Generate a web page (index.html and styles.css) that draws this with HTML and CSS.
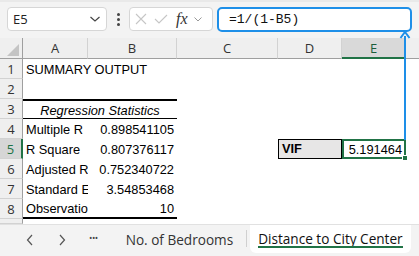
FILE: index.html
```html
<!DOCTYPE html>
<html lang="en">
<head>
  <meta charset="UTF-8">
  <title>Distance to City Center</title>
  <link rel="stylesheet" href="styles.css">
</head>
<body>
  <div class="formula-bar">
    <div class="name-box">
      <span>E5</span>
      <svg width="12" height="8" viewBox="0 0 12 8"><polyline points="1.5,2 6,6 10.5,2" fill="none" stroke="#444" stroke-width="1.2"/></svg>
    </div>
    <div class="grip">
      <i></i><i></i><i></i>
    </div>
    <div class="fx-box">
      <svg width="14" height="14" viewBox="0 0 14 14"><path d="M2 2 L12 12 M12 2 L2 12" stroke="#c6c6c6" stroke-width="1.1"/></svg>
      <svg width="16" height="14" viewBox="0 0 16 14"><polyline points="2,7 6,11 14,3" fill="none" stroke="#c6c6c6" stroke-width="1.1"/></svg>
      <span class="fx">fx</span>
      <svg width="10" height="7" viewBox="0 0 10 7"><polyline points="1.5,1.5 5,5 8.5,1.5" fill="none" stroke="#999" stroke-width="1"/></svg>
    </div>
    <div class="formula-input">=1/(1-B5)</div>
  </div>

  <div class="sheet">
    <div class="hdr corner"><span class="tri"></span></div>
    <div class="hdr col">A</div>
    <div class="hdr col">B</div>
    <div class="hdr col">C</div>
    <div class="hdr col">D</div>
    <div class="hdr col active">E</div>
    <div class="hdr col last"></div>

    <div class="hdr row">1</div>
    <div class="cell spill">SUMMARY OUTPUT</div>
    <div class="cell"></div><div class="cell"></div><div class="cell"></div><div class="cell"></div><div class="cell"></div>

    <div class="hdr row">2</div>
    <div class="cell"></div><div class="cell"></div><div class="cell"></div><div class="cell"></div><div class="cell"></div><div class="cell"></div>

    <div class="hdr row">3</div>
    <div class="cell title">Regression Statistics</div>
    <div class="cell"></div><div class="cell"></div><div class="cell"></div><div class="cell"></div>

    <div class="hdr row">4</div>
    <div class="cell label">Multiple R</div>
    <div class="cell num">0.898541105</div>
    <div class="cell"></div><div class="cell"></div><div class="cell"></div><div class="cell"></div>

    <div class="hdr row active">5</div>
    <div class="cell label">R Square</div>
    <div class="cell num">0.807376117</div>
    <div class="cell"></div>
    <div class="cell vif">VIF</div>
    <div class="cell num selected">5.191464<span class="handle"></span></div>
    <div class="cell"></div>

    <div class="hdr row">6</div>
    <div class="cell label">Adjusted R Square</div>
    <div class="cell num">0.752340722</div>
    <div class="cell"></div><div class="cell"></div><div class="cell"></div><div class="cell"></div>

    <div class="hdr row">7</div>
    <div class="cell label">Standard Error</div>
    <div class="cell num">3.54853468</div>
    <div class="cell"></div><div class="cell"></div><div class="cell"></div><div class="cell"></div>

    <div class="hdr row">8</div>
    <div class="cell label last-row">Observations</div>
    <div class="cell num last-row">10</div>
    <div class="cell"></div><div class="cell"></div><div class="cell"></div><div class="cell"></div>

    <div class="hdr row"></div>
    <div class="cell"></div><div class="cell"></div><div class="cell"></div><div class="cell"></div><div class="cell"></div><div class="cell"></div>
  </div>

  <div class="tabs">
    <svg class="nav" width="10" height="14" viewBox="0 0 10 14"><polyline points="7,2 2.5,7 7,12" fill="none" stroke="#555" stroke-width="1.2"/></svg>
    <svg class="nav" width="10" height="14" viewBox="0 0 10 14"><polyline points="3,2 7.5,7 3,12" fill="none" stroke="#555" stroke-width="1.2"/></svg>
    <span class="more">&bull;&bull;&bull;</span>
    <span class="tab">No. of Bedrooms</span>
    <span class="sep"></span>
    <span class="tab current">Distance to City Center</span>
  </div>

  <svg class="arrow" width="12" height="112" viewBox="0 0 12 112">
    <line x1="6" y1="6" x2="6" y2="110" stroke="#1e8fe8" stroke-width="2"/>
    <polyline points="1.5,8 6,2 10.5,8" fill="none" stroke="#1e8fe8" stroke-width="2"/>
  </svg>
</body>
</html>
```

FILE: styles.css
```css
* {
  box-sizing: border-box;
}
body {
  margin: 0;
  width: 419px;
  height: 256px;
  overflow: hidden;
  position: relative;
  background: #fff;
  font-family: "Liberation Sans", Arial, sans-serif;
}

/* formula bar */
.formula-bar {
  height: 38px;
  background: #f3f3f3;
  border-top: 2px solid #e9e9e9;
  display: flex;
  align-items: flex-start;
  padding: 5px 7px 0 7px;
}
.name-box {
  width: 100px;
  height: 24px;
  background: #fff;
  border: 1px solid #d6d6d6;
  border-radius: 4px;
  display: flex;
  align-items: center;
  justify-content: space-between;
  padding: 0 5px 0 5px;
  font-family: "Open Sans", "Noto Sans", sans-serif;
  font-size: 13px;
  color: #222;
}
.grip {
  width: 22px;
  height: 24px;
  display: flex;
  flex-direction: column;
  align-items: center;
  justify-content: center;
  gap: 2px;
}
.grip i {
  width: 3px;
  height: 3px;
  border-radius: 50%;
  background: #444;
}
.fx-box {
  width: 84px;
  height: 24px;
  background: #fff;
  border: 1px solid #d6d6d6;
  border-radius: 4px;
  display: flex;
  align-items: center;
  gap: 5px;
  padding-left: 4px;
}
.fx {
  font-family: "Liberation Serif", "Times New Roman", serif;
  font-style: italic;
  font-size: 16px;
  color: #333;
  margin-left: 2px;
}
.formula-input {
  margin-left: 4px;
  width: 195px;
  height: 25px;
  background: #fff;
  border: 2px solid #1e8fe8;
  border-radius: 5px;
  font-family: "Liberation Mono", "DejaVu Sans Mono", monospace;
  font-size: 13px;
  line-height: 21px;
  padding-left: 10px;
  color: #111;
}

/* sheet grid */
.sheet {
  display: grid;
  grid-template-columns: 23px 65px 89px 101px 64px 64px 13px;
  grid-template-rows: 21px repeat(8, 20px) 5px;
}
.hdr {
  background: #efefef;
  color: #333;
  font-family: "Open Sans", "Noto Sans", sans-serif;
  font-size: 13px;
  display: flex;
  align-items: center;
  justify-content: center;
}
.hdr.col {
  border-right: 1px solid #d2d2d2;
  border-bottom: 1px solid #9f9f9f;
}
.hdr.col.last {
  border-right: none;
}
.hdr.col.active {
  background: #d9d9d9;
  color: #1b5e3b;
  border-bottom: 2px solid #217346;
}
.hdr.row {
  border-right: 1px solid #9f9f9f;
  border-bottom: 1px solid #d2d2d2;
}
.hdr.row.active {
  background: #d6d6d6;
  color: #217346;
  border-right: 2px solid #217346;
}
.hdr.corner {
  position: relative;
  border-right: 1px solid #9f9f9f;
  border-bottom: 1px solid #9f9f9f;
}
.tri {
  position: absolute;
  right: 3px;
  bottom: 2px;
  width: 0;
  height: 0;
  border-left: 12px solid transparent;
  border-bottom: 12px solid #c4c4c4;
}
.cell {
  font-size: 12.8px;
  line-height: 20px;
  padding: 1px 3px 0 3px;
  color: #000;
  white-space: nowrap;
  overflow: hidden;
}
.cell.spill {
  overflow: visible;
}
.cell.title {
  grid-column: span 2;
  text-align: center;
  font-style: italic;
  border-top: 2px solid #000;
  border-bottom: 1px solid #000;
  line-height: 17px;
}
.cell.label {
  text-overflow: clip;
}
.cell.num {
  text-align: right;
}
.cell.last-row {
  border-bottom: 2px solid #000;
  line-height: 18px;
}
.cell.vif {
  background: #e7e6e6;
  border: 1px solid #000;
  font-weight: bold;
  line-height: 18px;
  padding-top: 0;
}
.cell.selected {
  position: relative;
  overflow: visible;
  border: 2px solid #217346;
  line-height: 16px;
  padding-top: 1px;
  padding-right: 2px;
}
.handle {
  position: absolute;
  right: -4px;
  bottom: -4px;
  width: 6px;
  height: 6px;
  background: #217346;
  border: 1px solid #fff;
}

/* sheet tabs */
.tabs {
  height: 32px;
  background: #f3f3f3;
  border-top: 1px solid #e1e1e1;
  display: flex;
  align-items: flex-start;
  padding-left: 25px;
  font-family: "Open Sans", "Noto Sans", sans-serif;
  font-size: 13.6px;
  color: #333;
}
.nav {
  margin-top: 8px;
  margin-right: 22px;
}
.more {
  margin-top: 6px;
  font-size: 9px;
  letter-spacing: -0.5px;
  color: #444;
  margin-right: 28px;
}
.tab {
  margin-top: 5px;
}
.sep {
  width: 1px;
  height: 17px;
  background: #d0d0d0;
  margin: 5px 3px 0 13px;
}
.tab.current {
  margin-top: 0;
  height: 28px;
  padding: 4px 8px 0 8px;
  background: #fff;
  border-radius: 0 0 6px 6px;
  color: #111;
  position: relative;
}
.tab.current::after {
  content: "";
  position: absolute;
  left: 8px;
  right: 8px;
  bottom: 5px;
  height: 2px;
  background: #217346;
}

/* reference arrow from cell to formula */
.arrow {
  position: absolute;
  left: 399px;
  top: 30px;
}
```
